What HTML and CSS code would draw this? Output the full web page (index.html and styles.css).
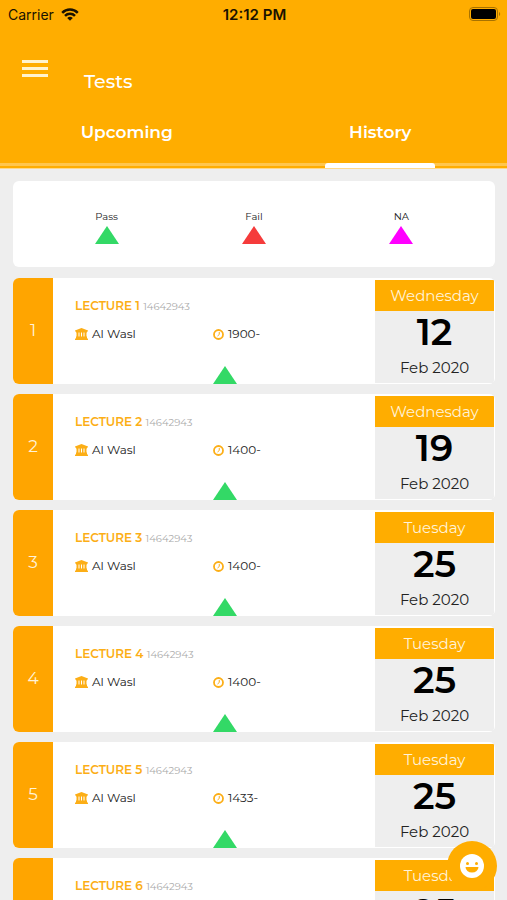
FILE: index.html
```html
<!DOCTYPE html>
<html lang="en">
<head>
  <meta charset="UTF-8" />
  <title>Tests</title>
  <meta name="viewport" content="width=device-width, initial-scale=1.0" />
  <link rel="stylesheet" href="styles.css">
</head>
<body>

  <!-- Shared icons -->
  <svg class="sprite" aria-hidden="true">
    <symbol id="icon-building" viewBox="0 0 26 24">
      <path d="M13 0 26 5v2h-2v2H2V7H0V5zM3 9h4v8h2V9h3v8h2V9h3v8h2V9h4v8h1v3H2v-3h1zM1 20h24v2h1v2H0v-2h1z" />
    </symbol>
    <symbol id="icon-clock" viewBox="0 0 22 22">
      <circle cx="11" cy="11" r="9" fill="none" stroke="currentColor" stroke-width="3.6" />
      <path d="M12.500 6v5L9 14" fill="none" stroke="currentColor" stroke-width="2" />
    </symbol>
    <symbol id="icon-triangle" viewBox="0 0 24 18">
      <path d="M12 0 24 18H0z" />
    </symbol>
  </svg>

  <div class="app">
    <header class="header">
      <div class="status">
        <div class="carrier">
          <span>Carrier</span>
          <svg width="18" height="13" viewBox="0 0 18 13" fill="none" stroke="#1a1200" stroke-width="2.5">
            <path d="M1.200 4.800a11 11 0 0 1 15.600 0" />
            <path d="M4 7.900a7 7 0 0 1 10 0" />
            <path d="M9 12.800 6.200 10a4 4 0 0 1 5.600 0z" fill="#1a1200" stroke="none" />
          </svg>
        </div>
        <time class="time">12:12 PM</time>
        <svg class="battery" width="32" height="15" viewBox="0 0 32 15">
          <rect x="0.5" y="0.5" width="28" height="13" rx="3.5" fill="none" stroke="#a87200" />
          <rect x="2" y="2" width="25" height="10" rx="2" fill="#000" />
          <path d="M30 5v4c1.600-.6 1.600-3.400 0-4z" fill="#a87200" />
        </svg>
      </div>
      <div class="title-bar">
        <button class="menu" type="button" aria-label="Menu">
          <span></span><span></span><span></span>
        </button>
        <h1 class="title">Tests</h1>
      </div>
      <nav class="tabs">
        <button class="tab" type="button">Upcoming</button>
        <button class="tab active" type="button">History</button>
      </nav>
    </header>

    <main class="content">
      <section class="legend">
        <div class="legend-item">Pass<svg class="triangle pass"><use href="#icon-triangle" /></svg></div>
        <div class="legend-item">Fail<svg class="triangle fail"><use href="#icon-triangle" /></svg></div>
        <div class="legend-item">NA<svg class="triangle na"><use href="#icon-triangle" /></svg></div>
      </section>

      <div class="list" id="list"></div>
    </main>

    <button class="chat" type="button" aria-label="Feedback">
      <svg width="24" height="24" viewBox="0 0 24 24">
        <circle cx="12" cy="12" r="12" fill="#fff" />
        <circle cx="7.500" cy="9.500" r="1.500" fill="#ffad00" />
        <circle cx="16.500" cy="9.500" r="1.500" fill="#ffad00" />
        <path d="M5.500 13h13a6.500 5.500 0 0 1-13 0z" fill="#ffad00" />
      </svg>
    </button>
  </div>

  <script>
    const tests = [
      { time: '1900-', weekday: 'Wednesday', day: 12 },
      { time: '1400-', weekday: 'Wednesday', day: 19 },
      { time: '1400-', weekday: 'Tuesday', day: 25 },
      { time: '1400-', weekday: 'Tuesday', day: 25 },
      { time: '1433-', weekday: 'Tuesday', day: 25 },
      { time: '1400-', weekday: 'Tuesday', day: 25 }
    ];

    document.getElementById('list').innerHTML = tests.map((test, i) => `
      <article class="card">
        <div class="number">${i + 1}</div>
        <div class="info">
          <h2 class="name">LECTURE ${i + 1} <span class="code">14642943</span></h2>
          <div class="details">
            <div class="detail"><svg class="building"><use href="#icon-building" /></svg>Al Wasl</div>
            <div class="detail"><svg class="clock"><use href="#icon-clock" /></svg>${test.time}</div>
          </div>
          <svg class="triangle pass"><use href="#icon-triangle" /></svg>
        </div>
        <div class="date">
          <div class="weekday">${test.weekday}</div>
          <div class="day">${test.day}</div>
          <div class="month">Feb 2020</div>
        </div>
      </article>
    `).join('');

    const tabs = document.querySelectorAll('.tab');
    tabs.forEach(tab => {
      tab.addEventListener('click', () => {
        tabs.forEach(t => t.classList.remove('active'));
        tab.classList.add('active');
      });
    });
  </script>

</body>
</html>
```

FILE: styles.css
```css
* {
  box-sizing: border-box;
}

body {
  margin: 0;
  font-family: Montserrat, Inter, sans-serif;
  background: #eee;
  color: #222;
}

button {
  font-family: inherit;
  border: none;
  padding: 0;
  background: none;
  cursor: pointer;
}

.sprite {
  display: none;
}

.app {
  display: flex;
  flex-direction: column;
  height: 100vh;
  overflow: hidden;
}

/* Header */
.header {
  flex: none;
  background: #ffad00;
  color: white;
}

.status {
  display: grid;
  grid-template-columns: 1fr auto 1fr;
  align-items: center;
  height: 28px;
  padding: 0 6px 0 8px;
  font-family: Inter, sans-serif;
  font-size: 15px;
  color: #1a1200;
}

.carrier {
  display: flex;
  align-items: center;
  gap: 7px;
  font-size: 14px;
}

.time {
  font-weight: 600;
}

.battery {
  justify-self: end;
}

.title-bar {
  display: flex;
  align-items: flex-start;
  gap: 36px;
  padding: 32px 22px 0;
  height: 76px;
}

.menu {
  display: flex;
  flex-direction: column;
  gap: 4px;
  width: 26px;
}

.menu span {
  height: 3px;
  background: #fff3cf;
}

.title {
  margin: 10px 0 0;
  font-size: 19px;
  line-height: 24px;
  font-weight: 500;
}

.tabs {
  display: flex;
  height: 65px;
  background: linear-gradient(#ffc64d, #ffc64d) 0 59px / 100% 3px no-repeat;
  border-bottom: 1px solid #ffd98a;
}

.tab {
  flex: 1;
  display: flex;
  flex-direction: column;
  align-items: center;
  justify-content: space-between;
  padding-top: 16px;
  font-size: 17px;
  line-height: 24px;
  font-weight: 600;
  color: white;
}

.tab::after {
  content: "";
  width: 110px;
  height: 5px;
  border-radius: 3px 3px 0 0;
}

.tab.active::after {
  background: white;
}

/* Content */
.content {
  flex: 1;
  min-height: 0;
  overflow-y: auto;
  scrollbar-width: none;
  padding: 12px 12px 12px 13px;
}

.legend {
  display: grid;
  grid-template-columns: repeat(3, 1fr);
  padding: 28px 20px 23px;
  margin-bottom: 11px;
  background: white;
  border-radius: 6px;
}

.legend-item {
  display: flex;
  flex-direction: column;
  align-items: center;
  gap: 1px;
  font-size: 10px;
  line-height: 16px;
}

.triangle {
  width: 24px;
  height: 18px;
}

.pass {
  fill: #33d966;
}

.fail {
  fill: #f53b3b;
}

.na {
  fill: #f0f;
}

.list {
  display: flex;
  flex-direction: column;
  gap: 10px;
}

.card {
  display: flex;
  height: 106px;
  background: white;
  border-radius: 6px;
  overflow: hidden;
}

.number {
  flex: none;
  display: flex;
  align-items: center;
  justify-content: center;
  width: 40px;
  padding-bottom: 2px;
  background: #ffa500;
  color: #fff3d9;
  font-size: 17px;
}

.info {
  flex: 1;
  display: flex;
  flex-direction: column;
  padding: 18px 0 0 22px;
}

.info .triangle {
  align-self: center;
  margin-top: auto;
}

.name {
  margin: 0 0 7px;
  font-size: 12px;
  line-height: 20px;
  font-weight: 600;
  color: #fcae16;
}

.code {
  font-size: 10px;
  font-weight: 400;
  color: #aaa;
}

.details {
  display: grid;
  grid-template-columns: 46fr 54fr;
}

.detail {
  display: flex;
  align-items: center;
  gap: 4px;
  font-size: 12px;
  line-height: 20px;
}

.building {
  width: 13px;
  height: 12px;
  fill: #fcae16;
}

.clock {
  width: 11px;
  height: 11px;
  color: #fcae16;
}

.date {
  flex: none;
  display: flex;
  flex-direction: column;
  width: 120px;
  border: 1px solid white;
  border-width: 2px 1px 1px 0;
  background: #eee;
  text-align: center;
}

.weekday {
  background: #ffad00;
  color: #fff3d9;
  font-size: 15px;
  line-height: 31px;
}

.day {
  font-size: 37px;
  line-height: 42px;
  font-weight: 600;
  color: black;
}

.month {
  font-size: 15px;
  line-height: 29px;
}

/* Floating button */
.chat {
  position: fixed;
  right: 10px;
  bottom: 9px;
  display: flex;
  align-items: center;
  justify-content: center;
  width: 50px;
  height: 50px;
  border-radius: 50%;
  background: #ffad00;
}
```
